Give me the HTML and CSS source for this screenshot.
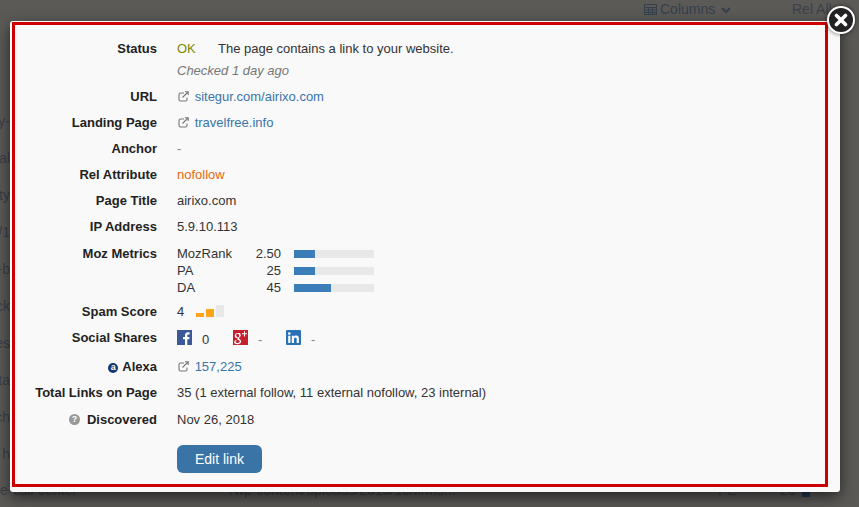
FILE: index.html
```html
<!DOCTYPE html>
<html lang="en">
<head>
<meta charset="UTF-8" />
<title>Link details</title>
<link rel="stylesheet" href="styles.css">
</head>
<body>

<!-- Dimmed page behind the dialog -->
<div class="page">
  <div class="toolbar">
    <span class="columns">
      <svg class="grid-icon" width="13" height="11" viewBox="0 0 13 11"><path d="M.5.5h12v10H.5zM.5 3.500h12M.5 6h12M.5 8.500h12M4.500 3.500v7M8.500 3.500v7" fill="none" stroke="currentColor"/></svg>
      Columns
      <svg class="chevron" width="10" height="7" viewBox="0 0 10 7"><path d="M1 1l4 4 4-4" fill="none" stroke="currentColor" stroke-width="2"/></svg>
    </span>
    <span class="rel-all">Rel All</span>
  </div>
  <ul class="page-list">
    <li>y-</li>
    <li>al</li>
    <li>ty</li>
    <li>n/1</li>
    <li>-b</li>
    <li>ck</li>
    <li>es</li>
    <li>ta</li>
    <li>ch</li>
    <li>h</li>
  </ul>
  <div class="page-last">
    <span class="page-slug">e-call-center</span>
    <span class="page-path">/wp-content/uploads/2015/10/firms...</span>
    <span class="page-rel">PE</span>
    <span class="page-num">23</span>
    <span class="page-mark"></span>
  </div>
</div>

<!-- Dialog -->
<div class="modal">
  <div class="details">
    <div class="row">
      <div class="label">Status</div>
      <div class="value"><span class="ok">OK</span>The page contains a link to your website.</div>
    </div>
    <div class="row row-checked">
      <div class="label"></div>
      <div class="value checked">Checked 1 day ago</div>
    </div>
    <div class="row">
      <div class="label">URL</div>
      <div class="value">
        <svg class="ext" width="12" height="11" viewBox="0 0 12 11"><path d="M9 6.500v2A1.500 1.500 0 0 1 7.500 10h-5A1.500 1.500 0 0 1 1 8.500v-5A1.500 1.500 0 0 1 2.500 2H6M4.500 6.500L10 1M7 .8h3.200V4" fill="none" stroke="#777" stroke-width="1.100"/></svg>
        <a href="#">sitegur.com/airixo.com</a>
      </div>
    </div>
    <div class="row">
      <div class="label">Landing Page</div>
      <div class="value">
        <svg class="ext" width="12" height="11" viewBox="0 0 12 11"><path d="M9 6.500v2A1.500 1.500 0 0 1 7.500 10h-5A1.500 1.500 0 0 1 1 8.500v-5A1.500 1.500 0 0 1 2.500 2H6M4.500 6.500L10 1M7 .8h3.200V4" fill="none" stroke="#777" stroke-width="1.100"/></svg>
        <a href="#">travelfree.info</a>
      </div>
    </div>
    <div class="row">
      <div class="label">Anchor</div>
      <div class="value muted">-</div>
    </div>
    <div class="row">
      <div class="label">Rel Attribute</div>
      <div class="value nofollow">nofollow</div>
    </div>
    <div class="row">
      <div class="label">Page Title</div>
      <div class="value">airixo.com</div>
    </div>
    <div class="row">
      <div class="label">IP Address</div>
      <div class="value">5.9.10.113</div>
    </div>
    <div class="row row-moz">
      <div class="label">Moz Metrics</div>
      <div class="value metrics">
        <div class="metric">
          <span class="metric-name">MozRank</span><span class="metric-num">2.50</span>
          <span class="bar"><span class="bar-fill" style="width:21px"></span></span>
        </div>
        <div class="metric">
          <span class="metric-name">PA</span><span class="metric-num">25</span>
          <span class="bar"><span class="bar-fill" style="width:21px"></span></span>
        </div>
        <div class="metric">
          <span class="metric-name">DA</span><span class="metric-num">45</span>
          <span class="bar"><span class="bar-fill" style="width:37px"></span></span>
        </div>
      </div>
    </div>
    <div class="row row-spam">
      <div class="label">Spam Score</div>
      <div class="value spam">
        <span>4</span>
        <span class="spam-bars">
          <span class="spam-bar spam-low"></span>
          <span class="spam-bar spam-mid"></span>
          <span class="spam-bar spam-high"></span>
        </span>
      </div>
    </div>
    <div class="row">
      <div class="label">Social Shares</div>
      <div class="value social">
        <svg class="social-icon" width="15" height="15" viewBox="0 0 15 15"><rect width="15" height="15" fill="#3b5998"/><path d="M10.300 15V9.200h1.900l.3-2.300h-2.200V5.500c0-.7.2-1.100 1.100-1.100h1.200V2.300c-.2 0-.9-.1-1.700-.1-1.700 0-2.900 1-2.900 3v1.700H6v2.300h2V15z" fill="#fff"/></svg>
        <span class="share share-fb">0</span>
        <svg class="social-icon" width="15" height="15" viewBox="0 0 15 15"><rect width="15" height="15" fill="#c5202d"/><path d="M5 3c-2 0-3.300 1.300-3.300 2.800C1.700 7.200 2.800 8.200 4.200 8.200l.5 0c-.1.300-.2.500-.2.800 0 .3.200.6.400.8-1.900 0-3.800.8-3.800 2.400C1.100 13.500 2.700 14.200 4.500 14.200c2.300 0 3.700-1.300 3.700-2.700 0-2-2.300-2.400-2.300-3.300 0-.7 1.800-1.100 1.800-3 0-.9-.4-1.500-.9-1.900l.9-.4V3zm-.3.700c1 0 1.500 1.100 1.500 2.100 0 .8-.4 1.700-1.300 1.700-1 0-1.700-1.100-1.700-2.200 0-.9.500-1.600 1.500-1.600zm.4 6.300c1.300.4 1.700 1 1.700 1.600 0 .9-.8 1.400-2 1.400-1.300 0-2.300-.6-2.300-1.500 0-1 1.300-1.500 2.600-1.500zM11 1.200v2.100H9v1h2v2.100h1V4.300h2v-1h-2V1.200z" fill="#fff"/></svg>
        <span class="share share-gp muted">-</span>
        <svg class="social-icon" width="15" height="15" viewBox="0 0 15 15"><rect width="15" height="15" rx="1" fill="#2b71b8"/><path d="M2.200 5.800h2.200V13H2.200zM3.300 2.200a1.300 1.300 0 1 1 0 2.600 1.300 1.300 0 0 1 0-2.600zM5.800 5.800h2.100v1c.4-.7 1.200-1.200 2.300-1.200 2.200 0 2.700 1.400 2.700 3.300V13h-2.200V9.400c0-.9 0-1.900-1.200-1.900S8 8.400 8 9.300V13H5.800z" fill="#fff"/></svg>
        <span class="share share-in muted">-</span>
      </div>
    </div>
    <div class="row row-alexa">
      <div class="label">
        <span class="alexa-icon">a</span>Alexa
      </div>
      <div class="value">
        <svg class="ext" width="12" height="11" viewBox="0 0 12 11"><path d="M9 6.500v2A1.500 1.500 0 0 1 7.500 10h-5A1.500 1.500 0 0 1 1 8.500v-5A1.500 1.500 0 0 1 2.500 2H6M4.500 6.500L10 1M7 .8h3.200V4" fill="none" stroke="#777" stroke-width="1.100"/></svg>
        <a href="#">157,225</a>
      </div>
    </div>
    <div class="row">
      <div class="label">Total Links on Page</div>
      <div class="value">35 (1 external follow, 11 external nofollow, 23 internal)</div>
    </div>
    <div class="row row-discovered">
      <div class="label"><span class="help-icon">?</span>Discovered</div>
      <div class="value">Nov 26, 2018</div>
    </div>
    <div class="row row-action">
      <div class="label"></div>
      <div class="value"><button class="edit-btn">Edit link</button></div>
    </div>
  </div>
</div>

<button class="close-btn" aria-label="Close">
  <svg width="14" height="14" viewBox="0 0 14 14"><path d="M2.500 2.500l9 9M11.500 2.500l-9 9" fill="none" stroke="#fff" stroke-width="3.600" stroke-linecap="round"/></svg>
</button>

</body>
</html>
```

FILE: styles.css
```css
html, body {
  margin: 0;
  height: 100%;
}

body {
  font-family: "Liberation Sans", Arial, sans-serif;
  font-size: 13px;
  line-height: 20px;
  color: #333;
  background: #5b5a57;
  overflow: hidden;
}

/* Dimmed page behind the dialog */
.page {
  color: #3b3f48;
  font-size: 14px;
}
.toolbar {
  display: flex;
  margin-top: -1px;
  padding-left: 644px;
}
.columns {
  display: flex;
  align-items: center;
  gap: 3px;
  width: 148px;
  color: #34404e;
}
.chevron {
  margin-left: 3px;
  margin-top: 2px;
}
.rel-all {
  white-space: nowrap;
}
.page-list {
  list-style: none;
  margin: 92px 0 0;
  padding: 0;
  width: 10px;
}
.page-list li {
  display: flex;
  justify-content: flex-end;
  height: 37px;
  white-space: nowrap;
}
.page-last {
  display: flex;
  align-items: center;
  height: 20px;
  margin-top: -1px;
  white-space: nowrap;
}
.page-slug {
  width: 230px;
}
.page-path {
  width: 488px;
}
.page-rel {
  width: 62px;
}
.page-num {
  width: 22px;
}
.page-mark {
  width: 8px;
  height: 14px;
  background: #1f3a55;
}

/* Dialog */
.modal {
  position: absolute;
  left: 10px;
  top: 21px;
  width: 830px;
  height: 471px;
  box-sizing: border-box;
  padding: 1px 12px 5px 2px;
  background: #f9f9f9;
  border-radius: 3px;
  box-shadow: 0 5px 15px rgba(0,0,0,0.6);
}
.details {
  box-sizing: border-box;
  height: 100%;
  padding-top: 14px;
  border: 3px solid #cc0000;
}
.row {
  display: flex;
  margin-bottom: 6px;
}
.label {
  width: 142px;
  flex: none;
  text-align: right;
  font-weight: bold;
  color: #222;
}
.value {
  margin-left: 20px;
}

.row-checked {
  margin-top: -4px;
}
.row-moz {
  margin-top: 7px;
  margin-bottom: 6px;
}
.row-alexa {
  margin-top: 7px;
}
.row-discovered {
  margin-top: 7px;
}
.row-action {
  margin-top: 15px;
}

.ok {
  display: inline-block;
  width: 41px;
  color: #7c8a00;
}
.checked {
  font-style: italic;
  color: #777;
}
.muted {
  color: #888;
}
.nofollow {
  color: #e8690b;
}
a {
  color: #3a75a8;
  text-decoration: none;
}
.ext {
  margin: 0 1px 0 1px;
  vertical-align: -1px;
}

/* Moz metrics */
.metrics {
  padding-top: 1px;
}
.metric {
  display: flex;
  align-items: center;
  height: 17px;
}
.metric-name {
  width: 55px;
}
.metric-num {
  width: 49px;
  text-align: right;
}
.bar {
  width: 80px;
  height: 8px;
  margin-left: 13px;
  background: #e8e8e8;
}
.bar-fill {
  display: block;
  height: 100%;
  background: #3a7db8;
}

/* Spam score */
.spam {
  display: flex;
}
.spam-bars {
  display: flex;
  align-items: flex-end;
  gap: 2px;
  height: 12px;
  margin: 3px 0 0 12px;
}
.spam-bar {
  width: 8px;
  background: #ffa31a;
}
.spam-low {
  height: 4px;
}
.spam-mid {
  height: 8px;
}
.spam-high {
  height: 12px;
  background: #e8e8e8;
}

/* Social shares */
.social {
  display: flex;
  align-items: flex-start;
}
.social-icon {
  flex: none;
  margin-top: 2px;
}
.share {
  box-sizing: border-box;
  padding: 2px 0 0 10px;
}
.share-fb {
  width: 41px;
}
.share-gp {
  width: 38px;
}

.alexa-icon {
  display: inline-block;
  width: 10px;
  height: 10px;
  margin-right: 4px;
  border-radius: 50%;
  background: #12386f;
  color: #fff;
  font-size: 9px;
  line-height: 9px;
  text-align: center;
  vertical-align: 1px;
}
.help-icon {
  display: inline-block;
  width: 11px;
  height: 11px;
  margin-right: 7px;
  border-radius: 50%;
  background: #999;
  color: #fff;
  font-size: 9px;
  line-height: 11px;
  text-align: center;
  vertical-align: 2px;
}

.edit-btn {
  width: 85px;
  height: 28px;
  padding: 0;
  background: #3a74a6;
  color: #fff;
  border: none;
  border-radius: 6px;
  font: 14px "Liberation Sans", Arial, sans-serif;
}

.close-btn {
  position: absolute;
  left: 827px;
  top: 6px;
  display: flex;
  align-items: center;
  justify-content: center;
  width: 28px;
  height: 28px;
  padding: 0;
  background: #222;
  border: 2px solid #fff;
  border-radius: 50%;
  box-shadow: 0 0 4px rgba(0,0,0,0.6);
}
```
